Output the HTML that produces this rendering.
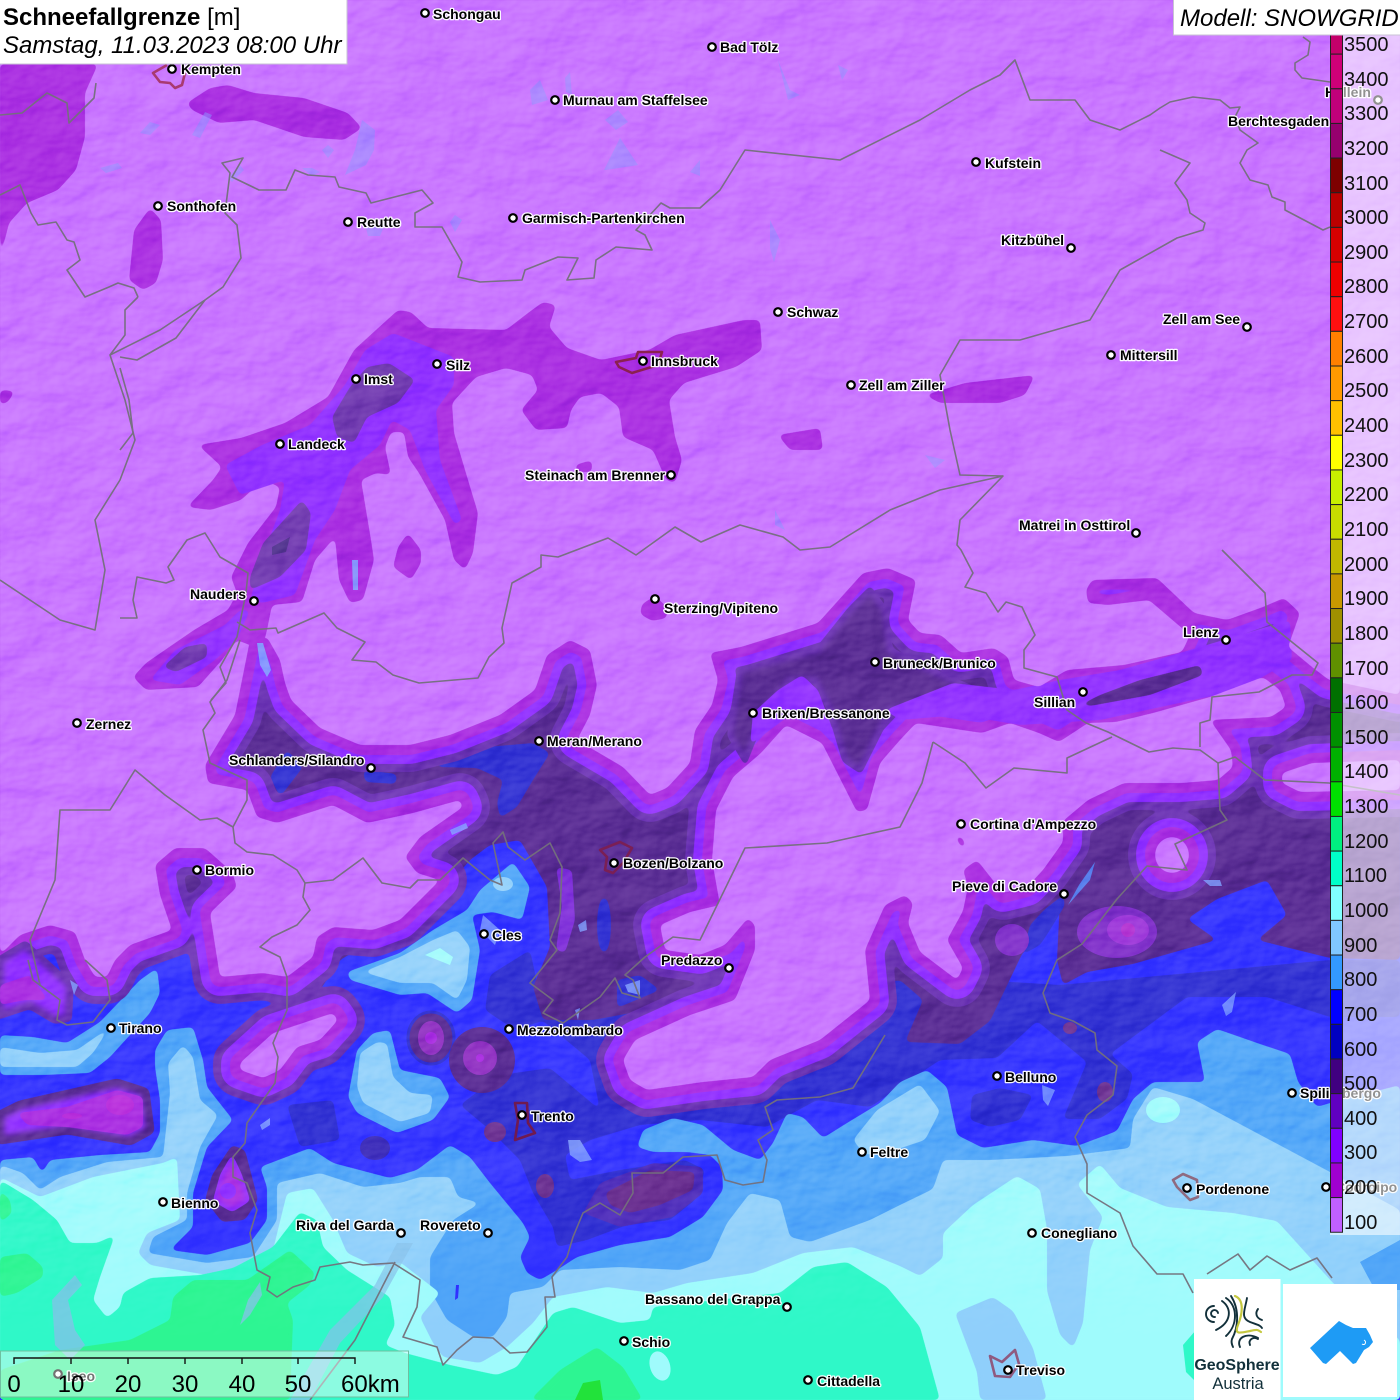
<!DOCTYPE html>
<html><head><meta charset="utf-8"><title>Schneefallgrenze</title>
<style>
html,body{margin:0;padding:0;background:#c670ff}
svg{display:block;position:absolute;left:0;top:0}
.l text{font:bold 14px "Liberation Sans",sans-serif;fill:#000;stroke:#fff;stroke-width:2.6px;paint-order:stroke;stroke-linejoin:round;stroke-opacity:.95}
.d circle{fill:#fff;stroke:#000;stroke-width:2.2}
.b{fill:none;stroke:#74707c;stroke-width:1.6;stroke-linejoin:round;opacity:.95}
.z path{fill:none;stroke-width:2.6;stroke-linejoin:round}
.lk path{fill:#8a8cff;opacity:.55}
.s{filter:url(#sm)}
</style></head><body>
<svg width="1400" height="1400" viewBox="0 0 1400 1400" xmlns="http://www.w3.org/2000/svg">
<defs>
<path id="n" d="M0,955L20,935 50,925 75,932 85,960 95,977 107,977 115,960 130,945 172,930 160,895 155,865 175,848 205,848 232,872 237,887 210,913 220,977 263,973 287,977 313,957 317,937 333,927 373,930 400,920 440,880 417,873 405,857 420,837 463,807 460,800 413,813 367,823 333,805 277,823 257,817 247,790 208,783 205,765 235,715 245,665 250,640 267,637 280,660 285,683 291,700 320,728 360,745 410,745 450,735 500,715 535,690 547,655 570,640 590,650 597,685 590,715 577,740 623,767 650,795 667,788 690,763 695,730 712,705 718,680 710,653 741,647 818,623 863,573 888,568 916,580 908,620 920,633 941,635 961,653 994,648 1008,657 1014,680 1039,687 1067,670 1124,665 1182,652 1190,635 1149,600 1108,605 1088,603 1086,590 1092,580 1157,578 1194,613 1227,620 1263,607 1284,598 1300,613 1288,647 1312,667 1329,680 1400,695 1400,0 0,0Z"/>
<path id="c" d="M712,860L716,810 733,777 761,753 786,725 822,743 857,812 867,810 880,763 900,740 916,723 982,733 1010,723 1039,733 1059,742 1088,723 1116,722 1153,713 1210,697 1263,677 1280,690 1286,707 1271,717 1210,720 1231,750 1233,767 1218,780 1182,783 1124,783 1088,800 1063,821 1063,842 1043,870 1027,887 1003,893 977,860 963,870 968,886 963,911 947,940 963,968 957,980 920,952 908,923 913,903 905,895 885,905 865,950 870,1000 820,1040 770,1060 753,1077 703,1082 647,1090 630,1080 623,1060 635,1040 690,1015 735,1000 755,950 755,925 748,918 725,945 700,955 665,950 660,925 690,912 720,905Z"/>
<path id="c2" d="M240,1063L273,1033 333,1013 338,1020 320,1040 297,1047 280,1070 263,1078 240,1070Z"/>
<path id="r" d="M1282,773L1312,763 1400,760 1400,790 1300,792 1282,783Z"/>
<ellipse id="ri" cx="1172" cy="855" rx="17" ry="18"/>
<filter id="sm" filterUnits="userSpaceOnUse" x="-40" y="-40" width="1480" height="1480" color-interpolation-filters="sRGB">
<feGaussianBlur stdDeviation="2.6"/>
<feComponentTransfer><feFuncA type="linear" slope="10" intercept="-4.5"/></feComponentTransfer>
</filter>
<filter id="hs" filterUnits="userSpaceOnUse" x="0" y="0" width="1400" height="1340" color-interpolation-filters="sRGB">
<feTurbulence type="fractalNoise" baseFrequency="0.016 0.024" numOctaves="4" seed="11" result="t"/>
<feDiffuseLighting in="t" surfaceScale="7" diffuseConstant="1" lighting-color="#fff"><feDistantLight azimuth="225" elevation="42"/></feDiffuseLighting>
</filter>
<linearGradient id="fg" gradientUnits="userSpaceOnUse" x1="0" y1="0" x2="0" y2="1340"><stop offset="0" stop-color="#fff"/><stop offset=".88" stop-color="#fff"/><stop offset="1" stop-color="#000"/></linearGradient>
<mask id="fm" maskUnits="userSpaceOnUse" x="0" y="0" width="1400" height="1400"><rect width="1400" height="1340" fill="url(#fg)"/></mask>
</defs>

<!-- 700 base -->
<rect width="1400" height="1400" fill="#2f2fff"/>
<!-- 600 -->
<g fill="#2c2cd0" class="s">
<path d="M530,1010L900,975 1060,985 1330,960 1400,960 1400,1017 1330,1017 1267,997 1187,997 1110,1054 1133,1074 1127,1099 1100,1119 1063,1119 1087,1062 1037,1021 997,1058 940,1060 870,1107 817,1100 767,1127 700,1120 640,1125 600,1110 590,1060Z"/>
<path d="M460,1105L500,1075 550,1068 600,1110 640,1125 590,1140 565,1155 570,1180 620,1170 685,1160 705,1170 695,1200 670,1220 627,1225 587,1240 557,1247 553,1227 533,1193 520,1160 490,1130Z"/>
<path d="M972,1095L1000,1088 1033,1095 1020,1120 990,1127 970,1120Z"/>
<path d="M287,1105L333,1100 340,1140 300,1147Z"/>
<path d="M490,975L530,950 545,1020 515,1030 485,1010Z"/>
</g>
<!-- 500 zone -->
<path class="s" fill="#54288f" d="M0,0L1400,0 1400,960 1330,958 1257,940 1287,915 1267,880 1217,899 1187,919 1217,940 1133,964 1087,972 1063,985 1057,960 1060,899 1063,895 1043,911 1043,940 1023,952 990,1021 960,1044 905,1042 923,1000 900,980 800,1000 700,1000 620,1015 593,1020 543,1020 533,987 550,947 547,887 520,840 490,845 470,860 440,895 400,925 340,960 320,990 250,985 215,965 195,945 170,945 150,965 110,975 60,950 0,950Z"/>
<!-- blue spots in 500 -->
<g fill="#2c2cd0" class="s">
<path d="M437,763L487,747 533,743 550,753 533,780 517,807 500,818 497,803 503,780 477,768 437,767Z"/>
<path d="M270,777L287,750 303,767 280,797Z"/>
<path d="M363,770L397,774 396,784 365,782Z"/>
<ellipse cx="604" cy="925" rx="7" ry="28"/>
<path d="M617,980L640,975 660,990 617,1008Z"/>
<path d="M1043,911L1063,895 1065,905 1050,930 1040,945 1022,955 1030,925Z"/>
</g>
<path class="s" d="M556,867L572,870 575,920 565,953 556,950 562,905Z" fill="#7b2cd8"/>
<!-- southern zones -->
<path class="s" fill="#4da3f8" d="M0,1160L33,1157 42,1173 50,1160 100,1155 150,1152 160,1133 160,1100 155,1067 155,1050 167,1030 193,1027 203,1060 207,1087 233,1120 207,1147 193,1193 193,1227 170,1250 207,1255 250,1243 267,1220 267,1187 260,1167 310,1148 333,1163 390,1178 417,1170 450,1145 470,1157 490,1183 523,1223 530,1237 520,1257 527,1273 540,1280 557,1270 577,1257 620,1245 670,1237 703,1217 723,1190 722,1167 710,1155 687,1152 653,1152 637,1147 643,1130 673,1118 703,1125 733,1150 760,1160 773,1143 787,1113 803,1117 823,1138 847,1123 880,1103 900,1082 927,1070 947,1087 957,1135 983,1148 1033,1140 1077,1146 1117,1131 1133,1099 1153,1082 1205,1082 1197,1042 1217,1029 1260,1044 1290,1054 1298,1082 1317,1107 1330,1103 1400,1085 1400,1400 0,1400Z"/>
<path class="s" fill="#8fcffb" d="M0,1165L23,1173 40,1190 60,1177 107,1162 163,1157 170,1093 168,1063 183,1045 193,1057 200,1100 218,1115 200,1147 187,1193 187,1220 153,1237 148,1253 207,1263 253,1257 277,1220 277,1183 320,1173 363,1187 400,1183 420,1177 450,1177 458,1197 480,1203 453,1220 430,1257 430,1290 447,1320 473,1337 493,1337 507,1317 510,1293 543,1287 560,1270 620,1267 680,1270 710,1260 727,1223 750,1193 780,1200 790,1237 810,1242 870,1220 900,1205 933,1189 943,1160 990,1160 1067,1156 1130,1148 1133,1119 1153,1087 1193,1099 1330,1172 1400,1210 1400,1400 0,1400Z"/>
<path fill="#4da3f8" d="M1360,1262L1400,1240 1400,1290 1375,1290Z"/>
<path class="s" fill="#9ffbfc" d="M0,1177L40,1197 93,1177 163,1163 177,1157 180,1220 147,1233 138,1253 150,1265 207,1275 240,1268 273,1250 287,1193 313,1188 333,1220 347,1253 377,1267 400,1262 440,1293 420,1317 433,1343 443,1357 480,1363 507,1347 533,1323 553,1297 607,1287 653,1293 687,1283 753,1273 803,1253 853,1247 900,1266 920,1276 943,1258 943,1233 973,1205 1017,1176 1040,1189 1047,1229 1047,1291 1060,1335 1073,1348 1083,1323 1090,1250 1103,1217 1077,1184 1100,1164 1120,1188 1167,1207 1233,1213 1277,1221 1333,1283 1400,1340 1400,1400 0,1400Z"/>
<path class="s" fill="#8fcffb" d="M955,1313L993,1297 1013,1311 1033,1348 1047,1400 980,1400 977,1372Z"/>
<ellipse cx="1163" cy="1110" rx="17" ry="13" fill="#9ffbfc"/>
<path class="s" fill="#2ff8c8" d="M0,1180L33,1200 57,1220 70,1243 97,1243 115,1235 100,1277 93,1300 107,1318 120,1307 123,1293 150,1278 200,1275 233,1268 273,1247 300,1212 317,1220 323,1247 347,1270 390,1297 395,1325 385,1345 405,1353 420,1357 450,1365 497,1375 517,1367 553,1313 573,1307 620,1323 650,1320 653,1307 780,1293 813,1267 847,1262 887,1287 920,1327 940,1400 0,1400Z"/>
<path d="M1196,1330L1183,1345 1186,1372 1196,1382Z" fill="#2ff8c8"/>
<g fill="#2df592" class="s">
<path d="M0,1190L10,1200 12,1213 0,1223Z"/>
<path d="M0,1257L27,1253 43,1267 43,1277 17,1293 0,1297Z"/>
<path d="M173,1297L193,1280 247,1280 290,1250 315,1273 310,1285 287,1303 293,1320 290,1400 0,1400 0,1370 60,1350 130,1340 170,1320Z"/>
<path d="M530,1400L560,1370 597,1347 623,1367 643,1400Z"/>
</g>
<path fill="#22e23a" d="M575,1400L583,1383 600,1380 603,1400Z"/>
<ellipse cx="660" cy="1366" rx="10" ry="15" transform="rotate(-18 660 1366)" fill="#9ffbfc"/>
<!-- Tirano strip -->
<path class="s" fill="#4da3f8" d="M0,1035L33,1037 67,1043 100,1022 140,980 157,968 160,993 150,1013 110,1057 90,1073 43,1075 0,1075Z"/>
<path class="s" fill="#8fcffb" d="M0,1047L40,1053 77,1050 110,1027 93,1053 77,1067 0,1067Z"/>
<!-- Cles -->
<path class="s" fill="#4da3f8" d="M513,862L530,887 522,920 493,912 472,915 480,950 472,1000 457,1013 427,993 400,995 350,980 347,972 400,953 433,930 467,910 480,890Z"/>
<path class="s" fill="#8fcffb" d="M433,940L457,930 470,947 467,980 457,1000 433,983 400,983 363,972 400,957Z"/>
<path fill="#9ffbfc" d="M425,955L440,948 453,957 450,965Z"/>
<ellipse cx="503" cy="884" rx="10" ry="7" fill="#8fcffb"/>
<path class="s" fill="#4da3f8" d="M390,1030L400,1070 440,1078 450,1097 433,1120 397,1133 357,1113 348,1097 357,1050 373,1033Z"/>
<path class="s" fill="#8fcffb" d="M387,1043L393,1077 410,1093 433,1095 430,1113 400,1122 363,1103 357,1087 360,1053 377,1042Z"/>
<path class="s" fill="#8fcffb" d="M853,1140L877,1110 920,1084 940,1111 925,1140 895,1150 865,1155Z"/>
<!-- Trento dark -->
<path class="s" fill="#4a2ab8" d="M583,1213L600,1183 653,1163 703,1167 703,1193 673,1217 620,1227Z"/>
<path class="s" fill="#63298a" d="M605,1193L650,1170 695,1172 693,1190 660,1205 630,1213 610,1205Z"/>
<ellipse cx="495" cy="1132" rx="11" ry="10" fill="#6a3090"/>
<ellipse cx="545" cy="1186" rx="9" ry="12" fill="#6a3090"/>
<ellipse cx="375" cy="1148" rx="15" ry="12" fill="#3a2ab8"/>
<ellipse cx="1105" cy="1092" rx="8" ry="10" fill="#6a3090"/>
<ellipse cx="1070" cy="1028" rx="7" ry="6" fill="#6a3090"/>

<!-- contour bands -->
<g fill="none" stroke-linejoin="round">
<g class="s" stroke="#662fb0" stroke-width="54"><use href="#n"/><use href="#c"/><use href="#c2"/><use href="#r"/><use href="#ri"/></g>
<g class="s" stroke="#8c2cff" stroke-width="38"><use href="#n"/><use href="#c"/><use href="#c2"/><use href="#r"/><use href="#ri"/></g>
<g class="s" stroke="#a62ae0" stroke-width="20"><use href="#n"/><use href="#c"/><use href="#c2"/><use href="#r"/><use href="#ri"/></g>
</g>
<!-- lobes -->
<path class="s" fill="#54288f" stroke="#662fb0" stroke-width="6" d="M740,670L818,650 850,610 870,590 885,610 890,650 930,670 975,690 980,700 890,710 860,770 845,760 830,710 815,680 790,680 765,710 745,760 730,735Z"/>
<path class="s" fill="#8c2cff" d="M753,713L778,690 802,675 818,690 830,722 839,750 815,725 790,715 770,730 750,745Z"/>
<path class="s" fill="#8c2cff" d="M953,683L1014,690 1060,680 1120,670 1190,650 1290,620 1292,660 1240,690 1100,720 1020,725 960,715 900,720 885,710Z"/>
<path class="s" fill="#54288f" d="M1080,705L1100,695 1140,680 1200,665 1203,675 1150,695 1090,706Z"/>
<!-- left blob -->
<path class="s" fill="#8c2cff" stroke="#662fb0" stroke-width="8" d="M0,960L25,945 70,985 68,1018 55,1020 30,1005 0,1015Z"/>
<path class="s" fill="#a62ae0" d="M0,985L30,975 48,1000 25,1000 0,1005Z"/>
<!-- west magenta -->
<path class="s" fill="#8c2cff" stroke="#54288f" stroke-width="9" stroke-linejoin="round" d="M0,1115L20,1105 117,1083 145,1092 150,1130 130,1141 67,1130 0,1140Z"/>
<path class="s" fill="#a62ae0" d="M17,1113L67,1107 117,1090 143,1097 143,1127 127,1135 67,1127 27,1125Z"/>
<ellipse cx="120" cy="1105" rx="14" ry="10" fill="#b52ada"/>
<ellipse cx="72" cy="1116" rx="10" ry="3" fill="#b52ada"/>
<!-- Bienno -->
<path class="s" fill="#54288f" d="M232,1145L245,1150 258,1200 245,1220 222,1222 205,1200 212,1175Z"/>
<path class="s" fill="#a62ae0" stroke="#8c2cff" stroke-width="4" d="M232,1158L240,1175 248,1200 232,1210 215,1200 222,1175Z"/>
<circle cx="228" cy="1191" r="8" fill="#8c2cff"/>
<!-- Mezzolombardo rings -->
<ellipse cx="431" cy="1038" rx="23" ry="26" fill="#54288f" stroke="#2c2cd0" stroke-width="3"/>
<ellipse cx="431" cy="1038" rx="13" ry="17" fill="#8d2fc0"/>
<circle cx="431" cy="1038" r="6" fill="#a62ae0"/>
<circle cx="482" cy="1060" r="33" fill="#54288f"/>
<circle cx="480" cy="1058" r="17" fill="#8d2fc0"/>
<circle cx="480" cy="1058" r="4" fill="#a62ae0"/>
<!-- Friuli -->
<ellipse cx="1117" cy="932" rx="40" ry="26" fill="#7d2ec8"/>
<ellipse cx="1128" cy="930" rx="21" ry="15" fill="#9a35d8"/>
<circle cx="1128" cy="930" r="7" fill="#b030d0"/>
<ellipse cx="1012" cy="940" rx="17" ry="16" fill="#7d2ec8"/>

<!-- island fills -->
<g class="s" fill="#c670ff"><use href="#n"/><use href="#c"/><use href="#c2"/><use href="#r"/><use href="#ri"/></g>

<!-- northern blobs -->
<g fill="#a62ae0" class="s">
<path d="M0,64L98,64 85,93 85,137 76,170 58,190 27,203 9,223 0,260Z"/>
<path d="M187,103L210,88 228,85 254,93 304,98 348,113 362,128 344,140 304,137 254,120 219,123 192,110Z"/>
<path d="M150,208L161,220 163,260 156,283 143,290 129,280 134,230Z"/>
<path d="M0,390L15,391 8,402 0,405Z"/>
<path d="M925,395L965,383 1035,375 1025,395 1000,403 940,403Z"/>
<path d="M778,435L820,428 823,450 790,450Z"/>
<path d="M642,604L655,596 667,607 667,618 652,621 640,614Z"/>
<path d="M133,677L146,663 194,630 228,610 237,593 231,577 248,543 276,507 280,487 263,480 241,500 211,510 187,507 213,480 222,467 198,445 241,438 285,423 328,397 354,350 398,310 411,312 428,328 506,330 528,313 543,302 556,305 549,327 567,348 601,360 649,350 675,335 744,320 760,320 762,350 736,367 684,383 669,400 675,437 682,460 675,483 666,480 653,450 623,437 619,407 601,393 580,397 571,410 567,428 536,430 521,410 538,390 532,375 506,368 476,377 452,403 454,433 471,490 478,513 473,553 465,570 454,560 445,520 419,473 408,457 404,432 391,432 385,447 391,475 376,473 361,480 371,540 374,560 363,600 350,603 339,580 335,537 315,560 302,602 272,605 267,630 262,650 237,640 222,660 198,687 146,690Z"/>
<path d="M408,533L421,550 421,563 411,580 393,567 398,547Z"/>
<path d="M575,465L592,460 592,472 577,472Z"/>
<path d="M955,835L963,838 966,848 960,846Z"/>
</g>
<g fill="#8c2cff" class="s">
<path d="M393,333L454,357 454,385 436,410 440,460 462,520 455,525 425,470 410,430 392,420 380,445 350,470 335,510 315,540 295,595 262,603 250,600 265,550 280,510 285,480 240,495 225,465 262,445 310,425 345,385 365,350Z"/>
<path d="M150,680L175,650 225,625 240,610 250,610 237,640 215,660 180,685Z"/>
</g>
<g fill="#6b35ac" class="s">
<path d="M332,417L350,387 367,367 389,363 415,380 398,403 367,417 354,443 337,437Z"/>
<path d="M250,577L263,543 302,500 311,513 306,550 280,577 250,590Z"/>
<path d="M163,667L185,647 207,643 207,657 176,672Z"/>
</g>
<path d="M272,547L290,537 286,552 272,555Z" fill="#4a2d88"/>

<!-- lakes -->
<g class="lk">
<path d="M140,133L150,122 160,125 150,135Z"/><path d="M192,135L205,112 212,115 200,138Z"/>
<path d="M228,178L240,165 244,170 232,182Z"/><path d="M100,168L118,163 122,168 106,173Z"/>
<path d="M362,120L375,130 374,150 366,165 345,175 355,150Z"/><path d="M322,150L328,145 334,150 328,158Z"/>
<path d="M302,168L312,168 320,172 312,176Z"/>
<path d="M530,90L540,80 548,100 532,105Z"/><path d="M565,78L570,72 572,95 566,92Z"/>
<path d="M605,120L618,110 628,122 616,130Z"/><path d="M604,170L620,138 638,165 606,170Z"/>
<path d="M690,172L700,160 700,176Z"/><path d="M778,60L790,90 800,95 788,100Z"/>
<path d="M838,65L848,70 842,80Z"/><path d="M770,220L780,240 774,262 770,248Z"/>
<path d="M450,222L455,215 462,220 455,232Z"/><path d="M366,228L386,222 380,236 368,236Z"/>
<path d="M925,455L945,460 935,468Z"/><path d="M775,510L785,530 775,525Z"/>
<path d="M352,560L358,560 358,590 353,590Z" style="fill:#7d9dff;opacity:.9"/>
<path d="M257,643L263,643 271,670 267,677 260,665Z" style="fill:#7d9dff;opacity:.9"/>
<path d="M450,830L466,823 468,828 452,835Z" style="fill:#7d9dff;opacity:.8"/>
<path d="M1079,885L1095,862 1090,880 1068,905Z" style="fill:#4d7df5;opacity:.9"/>
<path d="M1203,880L1220,880 1222,886 1210,886Z" style="fill:#7d9dff;opacity:.8"/>
<path d="M1222,1005L1236,992 1232,1012 1226,1016Z" style="fill:#7d9dff;opacity:.8"/>
<path d="M1042,1085L1055,1090 1048,1106 1043,1100Z" style="fill:#7d9dff;opacity:.8"/>
<path d="M568,1140L580,1140 592,1160 580,1162 570,1155Z" style="fill:#7d9dff;opacity:.8"/>
<path d="M575,1010L580,1008 578,1020Z" style="fill:#7d9dff;opacity:.8"/>
<path d="M578,925L586,920 587,930 580,932Z" style="fill:#7d9dff;opacity:.8"/>
<path d="M260,1125L270,1118 270,1125 262,1130Z" style="fill:#7d9dff;opacity:.8"/>
<path d="M70,980L78,985 74,995Z" style="fill:#7d9dff;opacity:.8"/>
<path d="M625,985L640,980 640,995 628,992Z" style="fill:#7d9dff;opacity:.8"/>
<path d="M483,915L500,930 495,945 480,930Z" style="fill:#7d9dff;opacity:.8"/>
<path d="M455,1300L456,1285 459,1285 458,1298Z" style="fill:#2f2fff;opacity:1"/>
<path d="M75,1275L82,1285 68,1300 75,1330 85,1345 70,1360 55,1345 52,1300Z" style="fill:#86c0ea;opacity:.75"/>
<path d="M260,1282L262,1295 250,1315 240,1325 248,1300Z" style="fill:#86c0ea;opacity:.75"/>
<path d="M397,1243L413,1243 383,1297 340,1343 310,1400 290,1400 330,1330 375,1285Z" style="fill:#86c0ea;opacity:.7"/>
</g>

<!-- hillshade -->
<rect width="1400" height="1340" filter="url(#hs)" mask="url(#fm)" style="mix-blend-mode:soft-light" opacity=".4"/>

<!-- borders -->
<g class="b">
<path d="M0,115L22,113 47,93 67,103 69,123 94,98 96,83"/>
<path d="M0,195L20,185 31,213 38,225 56,222 67,240 74,242 80,260 67,270 85,297 109,287 118,283 134,288 138,297"/>
<path d="M138,297L125,310 125,335 110,355 125,400 135,440 120,480 95,520 105,570 95,630 60,620 0,580"/>
<path d="M110,355L160,330 205,300 223,287 241,258 237,225 225,213 230,173 222,163 243,158 232,177 259,190 286,190 295,170 308,175 335,177 339,187 366,193 371,203 422,190 433,203 415,213 415,227 442,227 462,262 458,277 480,282 522,280 525,270 558,257 578,258 567,280 594,278 596,260 616,247 652,250 645,235 636,230 661,203 670,208 700,208 720,190 745,150 840,160 920,120 970,90 1000,75 1015,60 1030,100 1075,100 1090,120 1120,130 1150,115 1160,108 1170,102 1193,97 1220,100 1230,108 1240,107 1235,117 1240,130 1258,143 1247,150 1240,163 1250,180 1268,185 1272,197 1285,202 1285,210 1323,230 1330,227"/>
<path d="M1303,37L1310,42 1308,55 1295,63 1295,70 1302,78 1330,82"/>
<path d="M1160,150L1190,163 1175,183 1187,200 1190,213 1205,223 1203,230 1177,238 1120,270 1090,320 1020,340 960,340 940,375 950,430 960,475 1003,476 960,520 957,545 961,550 973,573 965,587 986,593 998,612 1006,602 1022,607 1035,635 1024,650 1024,668 1057,677 1067,710 1086,723 1108,732 1149,752 1173,748 1200,750 1218,763 1235,757 1265,780 1329,783 1400,795"/>
<path d="M120,357L137,360 176,338 205,300"/>
<path d="M120,368L129,400 133,433 120,450"/>
<path d="M120,618L137,618 133,600 137,577 166,583 174,580 168,567 187,540 205,533 220,557 248,573 246,593 237,637 220,667 226,683 211,700"/>
<path d="M237,622L250,630 276,628 278,633 324,613 337,628 365,642 352,660 376,662 393,675 419,683 478,678 489,657 504,643 502,628 512,583 541,567 541,555 558,557 608,538 636,555 675,527 701,542 740,525 783,537 800,550 830,547 890,510 940,490 1003,476"/>
<path d="M1222,550L1265,593 1267,622 1318,663 1312,675 1292,675 1259,692 1212,697 1210,720 1200,723 1200,747"/>
<path d="M1218,763L1220,810 1227,820 1175,844 1187,870 1147,866 1117,899 1082,944 1057,960 1043,993 1050,1013 1073,1021 1095,1033 1097,1050 1117,1066 1113,1095 1087,1115 1075,1137 1087,1164 1087,1193 1120,1213 1133,1246 1157,1274 1183,1274 1193,1293"/>
<path d="M1207,1274L1238,1254 1250,1270 1267,1256 1290,1270 1317,1258 1332,1278"/>
<path d="M933,742L965,763 986,788 1014,768 1067,773 1067,758 1112,737"/>
<path d="M933,742L922,783 900,827 827,843 745,848 700,940 673,937 645,957 625,975 633,980 640,998 622,993 615,978 600,997 563,1023 543,1013 553,1000 530,983 557,950 550,940 560,913 562,867 550,843 525,860 508,847 503,832 493,843 502,885 490,880 463,858 440,880 418,880 410,888 382,883 363,858 333,880 305,883 297,870 273,855 247,852 235,843 233,827 247,800 247,780 210,763 203,730 215,713 210,702 227,680 240,640"/>
<path d="M233,827L217,818 200,820 165,795 135,770 110,810 60,810 55,880 30,940 40,985"/>
<path d="M305,883L303,897 310,910 297,925 272,937 260,947 280,957 287,977 287,1010 273,1043 278,1057 275,1083 247,1123 245,1143 233,1157 233,1177 247,1183 257,1210 250,1233 257,1270 270,1277 267,1290 277,1297 293,1287 315,1280 320,1267 350,1262 363,1265 393,1263 420,1280 417,1307 403,1337 437,1347 443,1365 457,1350 473,1337 493,1338 510,1353 527,1352 547,1327 545,1297 555,1297 552,1277 567,1257 573,1237 583,1213 600,1203 620,1215 633,1193 632,1173 663,1173 683,1157 717,1155 725,1180 743,1185 763,1182 767,1160 758,1140 773,1130 765,1107 777,1100 820,1097 853,1088 870,1060 885,1035"/>
<path d="M28,960L33,980 60,1000 57,1020 67,1025 93,1022 110,1000 107,980 85,960"/>
<path d="M395,1262L355,1340 310,1400"/>
</g>

<!-- city outlines -->
<g class="z">
<path stroke="#a83a70" d="M167,65L153,73 160,82 170,83 175,88 182,85 185,73"/>
<path stroke="#8b2050" d="M616,362L636,358 638,352 662,352 658,365 632,373 619,367Z"/>
<path stroke="#7a1f55" d="M600,850L620,842 632,848 623,863 613,873 605,870 607,857Z"/>
<path stroke="#701a50" d="M515,1103L527,1103 528,1123 535,1133 515,1140 518,1120Z"/>
<path stroke="#8f6a80" d="M1173,1180L1183,1174 1197,1180 1198,1197 1190,1200 1177,1187Z"/>
<path stroke="#8f5a80" d="M990,1356L1002,1362 1015,1350 1019,1364 1010,1377 995,1376Z"/>
</g>

<!-- city dots -->
<g class="d">
<circle cx="425" cy="13" r="3.8"/><circle cx="712" cy="47" r="3.8"/><circle cx="172" cy="69" r="3.8"/><circle cx="555" cy="100" r="3.8"/><circle cx="1378" cy="100" r="3.8"/><circle cx="976" cy="162" r="3.8"/><circle cx="158" cy="206" r="3.8"/><circle cx="348" cy="222" r="3.8"/><circle cx="513" cy="218" r="3.8"/><circle cx="1071" cy="248" r="3.8"/><circle cx="778" cy="312" r="3.8"/><circle cx="1247" cy="327" r="3.8"/><circle cx="1111" cy="355" r="3.8"/><circle cx="437" cy="364" r="3.8"/><circle cx="643" cy="361" r="3.8"/><circle cx="356" cy="379" r="3.8"/><circle cx="851" cy="385" r="3.8"/><circle cx="280" cy="444" r="3.8"/><circle cx="671" cy="475" r="3.8"/><circle cx="1136" cy="533" r="3.8"/><circle cx="254" cy="601" r="3.8"/><circle cx="655" cy="599" r="3.8"/><circle cx="1226" cy="640" r="3.8"/><circle cx="875" cy="662" r="3.8"/><circle cx="1083" cy="692" r="3.8"/><circle cx="753" cy="713" r="3.8"/><circle cx="77" cy="723" r="3.8"/><circle cx="539" cy="741" r="3.8"/><circle cx="371" cy="768" r="3.8"/><circle cx="961" cy="824" r="3.8"/><circle cx="614" cy="863" r="3.8"/><circle cx="197" cy="870" r="3.8"/><circle cx="1064" cy="894" r="3.8"/><circle cx="484" cy="934" r="3.8"/><circle cx="729" cy="968" r="3.8"/><circle cx="111" cy="1028" r="3.8"/><circle cx="509" cy="1029" r="3.8"/><circle cx="997" cy="1076" r="3.8"/><circle cx="1292" cy="1093" r="3.8"/><circle cx="522" cy="1115" r="3.8"/><circle cx="862" cy="1152" r="3.8"/><circle cx="1326" cy="1187" r="3.8"/><circle cx="1187" cy="1188" r="3.8"/><circle cx="163" cy="1202" r="3.8"/><circle cx="401" cy="1233" r="3.8"/><circle cx="488" cy="1233" r="3.8"/><circle cx="1032" cy="1233" r="3.8"/><circle cx="787" cy="1307" r="3.8"/><circle cx="624" cy="1341" r="3.8"/><circle cx="1008" cy="1370" r="3.8"/><circle cx="808" cy="1380" r="3.8"/><circle cx="58" cy="1374" r="3.8"/>
</g>
<!-- city labels -->
<g class="l">
<text x="433" y="19">Schongau</text><text x="720" y="52">Bad Tölz</text><text x="181" y="74">Kempten</text><text x="563" y="105">Murnau am Staffelsee</text><text x="1325" y="97">Hallein</text><text x="1228" y="126">Berchtesgaden</text><text x="985" y="168">Kufstein</text><text x="167" y="211">Sonthofen</text><text x="357" y="227">Reutte</text><text x="522" y="223">Garmisch-Partenkirchen</text><text x="1001" y="245">Kitzbühel</text><text x="787" y="317">Schwaz</text><text x="1163" y="324">Zell am See</text><text x="1120" y="360">Mittersill</text><text x="446" y="370">Silz</text><text x="651" y="366">Innsbruck</text><text x="364" y="384">Imst</text><text x="859" y="390">Zell am Ziller</text><text x="288" y="449">Landeck</text><text x="525" y="480">Steinach am Brenner</text><text x="1019" y="530">Matrei in Osttirol</text><text x="190" y="599">Nauders</text><text x="664" y="613">Sterzing/Vipiteno</text><text x="1183" y="637">Lienz</text><text x="883" y="668">Bruneck/Brunico</text><text x="1034" y="707">Sillian</text><text x="762" y="718">Brixen/Bressanone</text><text x="86" y="729">Zernez</text><text x="547" y="746">Meran/Merano</text><text x="229" y="765">Schlanders/Silandro</text><text x="970" y="829">Cortina d'Ampezzo</text><text x="623" y="868">Bozen/Bolzano</text><text x="205" y="875">Bormio</text><text x="952" y="891">Pieve di Cadore</text><text x="492" y="940">Cles</text><text x="661" y="965">Predazzo</text><text x="119" y="1033">Tirano</text><text x="517" y="1035">Mezzolombardo</text><text x="1005" y="1082">Belluno</text><text x="1300" y="1098">Spilimbergo</text><text x="531" y="1121">Trento</text><text x="870" y="1157">Feltre</text><text x="1335" y="1192">Codroipo</text><text x="1196" y="1194">Pordenone</text><text x="171" y="1208">Bienno</text><text x="296" y="1230">Riva del Garda</text><text x="420" y="1230">Rovereto</text><text x="1041" y="1238">Conegliano</text><text x="645" y="1304">Bassano del Grappa</text><text x="632" y="1347">Schio</text><text x="1016" y="1375">Treviso</text><text x="817" y="1386">Cittadella</text><text x="67" y="1381">Iseo</text>
</g>

<!-- legend overlay -->
<rect x="1330" y="35" width="70" height="1200" fill="#fff" fill-opacity=".57"/>
<g stroke="#222" stroke-width="1">
<rect x="1330.5" y="19.5" width="12" height="34.65" fill="#c4006a"/>
<rect x="1330.5" y="54.15" width="12" height="34.65" fill="#cf0078"/>
<rect x="1330.5" y="88.8" width="12" height="34.65" fill="#c0007a"/>
<rect x="1330.5" y="123.45" width="12" height="34.65" fill="#96006e"/>
<rect x="1330.5" y="158.1" width="12" height="34.65" fill="#7d0000"/>
<rect x="1330.5" y="192.75" width="12" height="34.65" fill="#bb0000"/>
<rect x="1330.5" y="227.4" width="12" height="34.65" fill="#d70000"/>
<rect x="1330.5" y="262.05" width="12" height="34.65" fill="#ee0000"/>
<rect x="1330.5" y="296.7" width="12" height="34.65" fill="#ff1010"/>
<rect x="1330.5" y="331.35" width="12" height="34.65" fill="#ff8000"/>
<rect x="1330.5" y="366" width="12" height="34.65" fill="#ff9a00"/>
<rect x="1330.5" y="400.65" width="12" height="34.65" fill="#ffc000"/>
<rect x="1330.5" y="435.3" width="12" height="34.65" fill="#ffff00"/>
<rect x="1330.5" y="469.95" width="12" height="34.65" fill="#c8f000"/>
<rect x="1330.5" y="504.6" width="12" height="34.65" fill="#c8dc00"/>
<rect x="1330.5" y="539.25" width="12" height="34.65" fill="#c0b800"/>
<rect x="1330.5" y="573.9" width="12" height="34.65" fill="#c89800"/>
<rect x="1330.5" y="608.55" width="12" height="34.65" fill="#a09000"/>
<rect x="1330.5" y="643.2" width="12" height="34.65" fill="#609000"/>
<rect x="1330.5" y="677.85" width="12" height="34.65" fill="#007000"/>
<rect x="1330.5" y="712.5" width="12" height="34.65" fill="#009000"/>
<rect x="1330.5" y="747.15" width="12" height="34.65" fill="#00b000"/>
<rect x="1330.5" y="781.8" width="12" height="34.65" fill="#00e000"/>
<rect x="1330.5" y="816.45" width="12" height="34.65" fill="#00f080"/>
<rect x="1330.5" y="851.1" width="12" height="34.65" fill="#00ffc8"/>
<rect x="1330.5" y="885.75" width="12" height="34.65" fill="#80ffff"/>
<rect x="1330.5" y="920.4" width="12" height="34.65" fill="#80c8ff"/>
<rect x="1330.5" y="955.05" width="12" height="34.65" fill="#3399ff"/>
<rect x="1330.5" y="989.7" width="12" height="34.65" fill="#0000ff"/>
<rect x="1330.5" y="1024.35" width="12" height="34.65" fill="#0000c0"/>
<rect x="1330.5" y="1059" width="12" height="34.65" fill="#400080"/>
<rect x="1330.5" y="1093.65" width="12" height="34.65" fill="#6000c0"/>
<rect x="1330.5" y="1128.3" width="12" height="34.65" fill="#8000ff"/>
<rect x="1330.5" y="1162.95" width="12" height="34.65" fill="#a000d0"/>
<rect x="1330.5" y="1197.6" width="12" height="34.65" fill="#c060ff"/>
</g>
<g font-family="'Liberation Sans',sans-serif" font-size="20" fill="#111">
<text x="1344" y="51">3500</text><text x="1344" y="86">3400</text><text x="1344" y="120">3300</text><text x="1344" y="155">3200</text><text x="1344" y="190">3100</text><text x="1344" y="224">3000</text><text x="1344" y="259">2900</text><text x="1344" y="293">2800</text><text x="1344" y="328">2700</text><text x="1344" y="363">2600</text><text x="1344" y="397">2500</text><text x="1344" y="432">2400</text><text x="1344" y="467">2300</text><text x="1344" y="501">2200</text><text x="1344" y="536">2100</text><text x="1344" y="571">2000</text><text x="1344" y="605">1900</text><text x="1344" y="640">1800</text><text x="1344" y="675">1700</text><text x="1344" y="709">1600</text><text x="1344" y="744">1500</text><text x="1344" y="778">1400</text><text x="1344" y="813">1300</text><text x="1344" y="848">1200</text><text x="1344" y="882">1100</text><text x="1344" y="917">1000</text><text x="1344" y="952">900</text><text x="1344" y="986">800</text><text x="1344" y="1021">700</text><text x="1344" y="1056">600</text><text x="1344" y="1090">500</text><text x="1344" y="1125">400</text><text x="1344" y="1159">300</text><text x="1344" y="1194">200</text><text x="1344" y="1229">100</text>
</g>

<!-- title boxes -->
<rect x="-1" y="-1" width="348" height="65" fill="#fff" stroke="#c9c3d4"/>
<text x="3" y="25" font-family="'Liberation Sans',sans-serif" font-size="24" fill="#000"><tspan font-weight="bold">Schneefallgrenze</tspan> [m]</text>
<text x="3" y="53" font-family="'Liberation Sans',sans-serif" font-size="24" font-style="italic" fill="#000">Samstag, 11.03.2023 08:00 Uhr</text>
<rect x="1173.5" y="-1" width="230" height="36" fill="#fff" stroke="#c9c3d4"/>
<text x="1180" y="26" font-family="'Liberation Sans',sans-serif" font-size="24" font-style="italic" fill="#000">Modell: SNOWGRID</text>

<!-- scale -->
<rect x="0.5" y="1351" width="408" height="46" fill="#fff" fill-opacity=".45" stroke="#6fbfa0"/>
<path d="M14,1364V1358H355V1364M71,1358V1364M128,1358V1364M185,1358V1364M242,1358V1364M298,1358V1364" fill="none" stroke="#111" stroke-width="1.4"/>
<g font-family="'Liberation Sans',sans-serif" font-size="24" fill="#000">
<text x="14" y="1392" text-anchor="middle">0</text><text x="71" y="1392" text-anchor="middle">10</text><text x="128" y="1392" text-anchor="middle">20</text><text x="185" y="1392" text-anchor="middle">30</text><text x="242" y="1392" text-anchor="middle">40</text><text x="298" y="1392" text-anchor="middle">50</text><text x="341" y="1392">60km</text>
</g>

<!-- logos -->
<rect x="1194" y="1279" width="86.5" height="121" fill="#fff"/>
<rect x="1283" y="1284" width="114" height="113" fill="#fff"/>
<g fill="none" stroke="#12303a" stroke-width="1.9" stroke-linecap="round">
<path d="M1218,1313A3.5,3.5 0 1 0 1215,1317"/>
<path d="M1214,1306A8,8 0 1 0 1214,1322"/>
<path d="M1222,1301C1232,1308 1232,1322 1216,1330"/>
<path d="M1226,1298C1238,1306 1238,1325 1226,1336"/>
<path d="M1231,1296C1240,1310 1238,1328 1232,1339 1231,1342 1232,1345 1233,1347"/>
<path d="M1247,1298C1245,1310 1240,1318 1250,1322 1258,1325 1260,1325 1262,1328"/>
<path d="M1258,1309C1255,1313 1256,1318 1262,1320"/>
<path d="M1240,1347C1236,1338 1246,1332 1258,1338"/>
<path d="M1250,1345C1248,1340 1253,1336 1258,1339"/>
</g>
<path d="M1235,1296C1245,1300 1242,1315 1238,1325 1234,1335 1240,1333 1250,1331 1258,1329 1258,1330 1261,1332" fill="none" stroke="#c5c840" stroke-width="2.2" stroke-linecap="round"/>
<text x="1237" y="1370" text-anchor="middle" font-family="'Liberation Sans',sans-serif" font-weight="bold" font-size="16" fill="#12303a">GeoSphere</text>
<text x="1238" y="1389" text-anchor="middle" font-family="'Liberation Sans',sans-serif" font-size="16.5" fill="#12303a">Austria</text>
<path fill="#1e9bf5" d="M1310,1348L1339,1321 1346,1325 1353,1328 1358,1328 1366,1328 1370,1335 1373,1342 1369,1347 1364,1350 1356,1363 1353,1364 1340,1351 1326,1364 1323,1363Z"/>
<path d="M1364,1340C1367,1342 1365,1346 1362,1344" fill="none" stroke="#fff" stroke-width="1"/>
</svg>
</body></html>
